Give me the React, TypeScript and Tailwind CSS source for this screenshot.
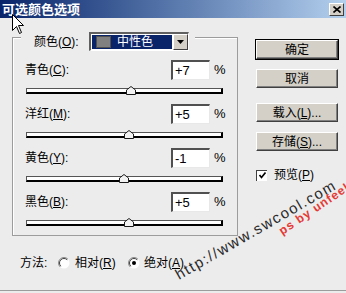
import React from 'react';

const rows = [
  { label: '青色', key: 'C', value: '+7', v: 7 },
  { label: '洋红', key: 'M', value: '+5', v: 5 },
  { label: '黄色', key: 'Y', value: '-1', v: -1 },
  { label: '黑色', key: 'B', value: '+5', v: 5 },
];

function Slider({ v }: { v: number }) {
  const left = ((v + 100) / 200) * 197 - 6;
  return (
    <div className="relative ml-[1px] mt-[8px] h-[6px] w-[197px] border-t border-l border-b-2 border-r-2 border-t-[#555] border-l-[#555] border-b-black border-r-black bg-white">
      <svg className="absolute top-[-3px]" style={{ left }} width="10" height="9" viewBox="0 0 10 9">
        <path d="M0.5 4 L5 0.5 L9.5 4 V8.5 H0.5 Z" fill="#f2f2f2" stroke="#1a1a1a" />
      </svg>
    </div>
  );
}

function Btn({ children, def }: { children: React.ReactNode; def?: boolean }) {
  return (
    <button
      className={
        def
          ? 'h-[19px] w-[82px] border border-t-white border-l-white border-r-[#404040] border-b-[#404040] bg-[#d4d0c8] text-[12px] leading-none text-black shadow-[0_0_0_1px_#000,inset_-1px_-1px_0_#808080]'
          : 'h-[19px] w-[82px] border border-t-white border-l-white border-r-[#404040] border-b-[#404040] bg-[#d4d0c8] text-[12px] leading-none text-black shadow-[inset_-1px_-1px_0_#808080]'
      }
    >
      {children}
    </button>
  );
}

function Radio({ checked }: { checked?: boolean }) {
  return (
    <svg width="12" height="12" viewBox="0 0 12 12">
      <circle cx="6" cy="6" r="5.5" fill="#fff" />
      <path d="M9.9 2.1 A5.5 5.5 0 0 0 2.1 9.9" stroke="#8a8a8a" fill="none" />
      <path d="M9.2 2.8 A4.5 4.5 0 0 0 2.8 9.2" stroke="#404040" fill="none" />
      {checked && <circle cx="6" cy="6" r="2" fill="#000" />}
    </svg>
  );
}

export default function App() {
  return (
    <div className="relative flex h-[293px] w-[346px] flex-col overflow-hidden bg-[#ececec] font-['Liberation_Sans','Noto_Sans_CJK_SC',sans-serif] text-[12px] text-black">
      {/* title bar */}
      <div className="flex h-[18px] items-center justify-between bg-gradient-to-r from-[#0a246a] to-[#b4d0ee] pl-[2px] pr-[2px]">
        <span className="text-[13px] font-bold leading-none text-white">可选颜色选项</span>
        <div className="flex h-[13px] w-[15px] items-center justify-center border border-t-white border-l-white border-r-[#404040] border-b-[#404040] bg-[#d4d0c8]">
          <svg width="8" height="7" viewBox="0 0 8 7">
            <path d="M0.5 0.5 L7.5 6.5 M7.5 0.5 L0.5 6.5" stroke="#000" strokeWidth="1.6" />
          </svg>
        </div>
      </div>

      <div className="flex pl-[12px] pt-[19px]">
        {/* group box */}
        <div className="relative h-[199px] w-[226px] border border-[#9c9c9c] shadow-[inset_1px_1px_0_#fff]">
          <div className="absolute left-[8px] top-[-6px] flex h-[19px] items-center bg-[#ececec] pl-[13px] pr-[6px]">
            <span className="w-[55px]">
              颜色(<span className="underline">O</span>):
            </span>
            <div className="flex h-[19px] w-[100px] border-t-2 border-l-2 border-b border-r border-t-[#606060] border-l-[#606060] border-b-white border-r-white bg-white">
              <div className="m-[1px] flex flex-1 items-center bg-[#0a246a] pl-[4px]">
                <div className="h-[12px] w-[15px] border border-[#505050] bg-[#808080]" />
                <span className="ml-[6px] text-[12px] leading-none text-white">中性色</span>
              </div>
              <div className="flex w-[15px] items-center justify-center border border-t-white border-l-white border-r-[#404040] border-b-[#404040] bg-[#d4d0c8]">
                <svg width="7" height="4" viewBox="0 0 7 4">
                  <path d="M0 0 H7 L3.5 4 Z" fill="#000" />
                </svg>
              </div>
            </div>
          </div>

          <div className="flex flex-col pl-[12px] pt-[22px]">
            {rows.map((r) => (
              <div key={r.key} className="mb-[10px] flex flex-col">
                <div className="flex h-[20px] items-center">
                  <span className="w-[146px]">
                    {r.label}(<span className="underline">{r.key}</span>):
                  </span>
                  <div className="flex h-[20px] w-[39px] items-center border-t-2 border-l-2 border-b border-r border-t-[#505050] border-l-[#505050] border-b-[#e8e8e8] border-r-[#e8e8e8] bg-white pl-[2px] text-[13px]">
                    {r.value}
                  </div>
                  <span className="ml-[4px] text-[13px]">%</span>
                </div>
                <Slider v={r.v} />
              </div>
            ))}
          </div>
        </div>

        {/* right column */}
        <div className="ml-[18px] mt-[3px] flex flex-col">
          <Btn def>确定</Btn>
          <div className="mt-[10px]">
            <Btn>取消</Btn>
          </div>
          <div className="mt-[15px]">
            <Btn>
              载入(<span className="underline">L</span>)...
            </Btn>
          </div>
          <div className="mt-[10px]">
            <Btn>
              存储(<span className="underline">S</span>)...
            </Btn>
          </div>
          <div className="mt-[15px] flex items-center">
            <div className="flex h-[11px] w-[11px] items-center justify-center border-t border-l border-t-[#404040] border-l-[#404040] bg-white">
              <svg width="9" height="9" viewBox="0 0 9 9">
                <path d="M1.5 4 L3.5 6.5 L7.5 1.5" stroke="#000" strokeWidth="1.7" fill="none" />
              </svg>
            </div>
            <span className="ml-[7px]">
              预览(<span className="underline">P</span>)
            </span>
          </div>
        </div>
      </div>

      {/* method row */}
      <div className="mt-[19px] flex h-[16px] items-center pl-[20px]">
        <span className="w-[38px]">方法:</span>
        <Radio />
        <span className="ml-[5px] w-[53px]">
          相对(<span className="underline">R</span>)
        </span>
        <Radio checked />
        <span className="ml-[4px]">
          绝对(<span className="underline">A</span>)
        </span>
      </div>

      <div className="mt-auto h-[3px] border-t border-[#9c9c9c]" />

      {/* watermark */}
      <div className="absolute left-[256px] top-[230px] -translate-x-1/2 -translate-y-1/2 rotate-[-30deg] whitespace-nowrap text-[15px] tracking-[1.5px] text-[#2a2a2a]">
        http://www.swcool.com
      </div>
      <div className="absolute left-[314px] top-[209px] -translate-x-1/2 -translate-y-1/2 rotate-[-34deg] whitespace-nowrap text-[12px] font-semibold tracking-[1px] text-[#e53935]">
        ps by unfeel
      </div>

      {/* mouse cursor */}
      <svg className="absolute left-[12px] top-[14px]" width="13" height="21" viewBox="0 0 13 21">
        <path d="M0.5 0.5 V16.5 L4.5 12.5 L7.5 19.5 L9.5 18.5 L6.5 11.5 H11.5 Z" fill="#fff" stroke="#000" />
      </svg>
    </div>
  );
}
